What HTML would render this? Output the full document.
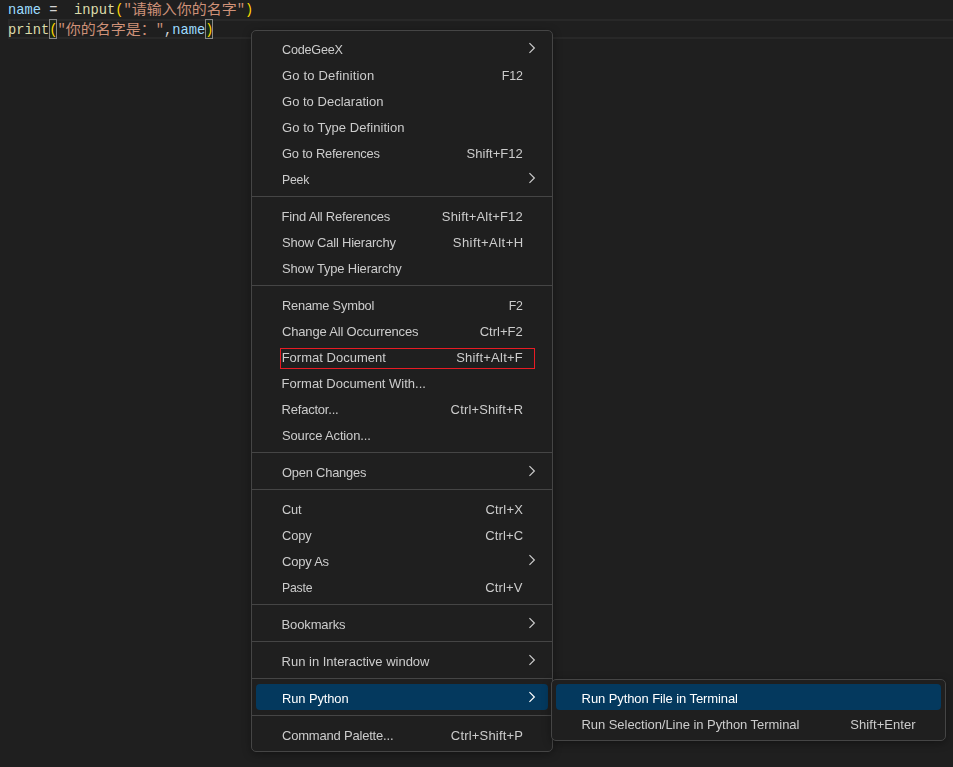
<!DOCTYPE html>
<html lang="en"><head><meta charset="utf-8"><title>Editor context menu</title>
<style>
html,body{margin:0;padding:0;}
body{width:953px;height:767px;background:#1f1f1f;overflow:hidden;position:relative;font-family:"Liberation Sans","Noto Sans CJK SC",sans-serif;}
.code{position:absolute;left:8px;height:20px;line-height:20px;white-space:pre;font-family:"Liberation Mono","Noto Sans CJK SC",monospace;font-size:13.75px;color:#d4d4d4;}
.code .cj{font-family:"Noto Sans CJK SC","Liberation Mono",monospace;font-size:15px;display:inline-block;line-height:20px;vertical-align:top;position:relative;top:-2px;transform:scaleY(0.93);transform-origin:50% 20%}
.l1{top:1px;}
.l2{top:21px;}
.hl{position:absolute;left:8px;top:19px;width:1000px;height:20px;box-sizing:border-box;border:2px solid #282828;}
.bm{position:absolute;top:19px;width:8px;height:20px;box-sizing:border-box;border:1px solid #888;background:rgba(0,100,0,0.1);}
.v{color:#9cdcfe} .f{color:#dcdcaa} .b{color:#ffd700} .s{color:#ce9178}
.menu{will-change:transform;position:absolute;box-sizing:border-box;background:#1f1f1f;border:1px solid #454545;border-radius:5px;padding:4px 0;box-shadow:0 2px 8px rgba(0,0,0,0.36);font-size:13px;color:#cccccc;}
#m1{left:251px;top:30px;width:302px;height:722px;}
#m2{left:551px;top:679px;width:395px;height:62px;}
.item{position:relative;height:26px;line-height:26px;margin:0 4px;border-radius:4px;white-space:nowrap;}
.item.sel{background:#04395e;color:#fff;}
.lbl{position:absolute;left:26px;top:2px;transform-origin:0 50%;}
.kb{position:absolute;right:26px;top:2px;transform-origin:100% 50%;}
.chev{position:absolute;right:12px;top:7px;}
.sep{height:1px;background:#454545;margin:5px 0;}
.red{position:absolute;left:280px;top:348px;width:255px;height:21px;box-sizing:border-box;border:1px solid #e81c24;}
</style></head><body>
<div class="hl"></div>
<div class="bm" style="left:49px"></div>
<div class="bm" style="left:205px"></div>
<div class="code l1"><span class="v">name</span> =  <span class="f">input</span><span class="b">(</span><span class="s">"<span class="cj">请输入你的名字</span>"</span><span class="b">)</span></div>
<div class="code l2"><span class="f">print</span><span class="b">(</span><span class="s">"<span class="cj">你的名字是：</span>"</span>,<span class="v">name</span><span class="b">)</span></div>
<div class="menu" id="m1">
<div class="item"><span class="lbl" style="letter-spacing:-0.22px;transform:scaleX(0.9712);left:26.13px">CodeGeeX</span><svg class="chev" width="8" height="12" viewBox="0 0 8 12"><path d="M1.45 1.15 L6.35 6 L1.45 10.85" fill="none" stroke="currentColor" stroke-width="1.2" stroke-linejoin="miter"/></svg></div>
<div class="item"><span class="lbl" style="letter-spacing:0.17px;left:26.03px">Go to Definition</span><span class="kb" style="letter-spacing:-0.22px;transform:scaleX(0.9618);right:25.28px">F12</span></div>
<div class="item"><span class="lbl" style="letter-spacing:0.01px;transform:scaleX(1.0006);left:26.08px">Go to Declaration</span></div>
<div class="item"><span class="lbl" style="letter-spacing:0.07px;left:26.03px">Go to Type Definition</span></div>
<div class="item"><span class="lbl" style="letter-spacing:-0.22px;transform:scaleX(0.9943);left:26.08px">Go to References</span><span class="kb" style="letter-spacing:0.03px;right:25.22px">Shift+F12</span></div>
<div class="item"><span class="lbl" style="letter-spacing:-0.22px;transform:scaleX(0.9445);left:25.80px">Peek</span><svg class="chev" width="8" height="12" viewBox="0 0 8 12"><path d="M1.45 1.15 L6.35 6 L1.45 10.85" fill="none" stroke="currentColor" stroke-width="1.2" stroke-linejoin="miter"/></svg></div>
<div class="sep"></div>
<div class="item"><span class="lbl" style="letter-spacing:-0.22px;left:25.60px">Find All References</span><span class="kb" style="letter-spacing:0.18px;right:25.08px">Shift+Alt+F12</span></div>
<div class="item"><span class="lbl" style="letter-spacing:-0.20px;transform:scaleX(0.9976);left:25.95px">Show Call Hierarchy</span><span class="kb" style="letter-spacing:0.44px;transform:scaleX(1.0035);right:24.17px">Shift+Alt+H</span></div>
<div class="item"><span class="lbl" style="letter-spacing:-0.17px;transform:scaleX(0.9961);left:25.95px">Show Type Hierarchy</span></div>
<div class="sep"></div>
<div class="item"><span class="lbl" style="letter-spacing:-0.22px;transform:scaleX(0.9883);left:25.80px">Rename Symbol</span><span class="kb" style="letter-spacing:-0.22px;transform:scaleX(0.9516);right:25.61px">F2</span></div>
<div class="item"><span class="lbl" style="letter-spacing:-0.19px;transform:scaleX(1.0019);left:26.10px">Change All Occurrences</span><span class="kb" style="letter-spacing:0.02px;right:25.24px">Ctrl+F2</span></div>
<div class="item"><span class="lbl" style="letter-spacing:0.01px;left:25.68px">Format Document</span><span class="kb" style="letter-spacing:0.24px;transform:scaleX(0.9977);right:25.23px">Shift+Alt+F</span></div>
<div class="item"><span class="lbl" style="letter-spacing:-0.01px;left:25.60px">Format Document With...</span></div>
<div class="item"><span class="lbl" style="letter-spacing:-0.22px;left:25.60px">Refactor...</span><span class="kb" style="letter-spacing:0.20px;transform:scaleX(0.9915);right:24.74px">Ctrl+Shift+R</span></div>
<div class="item"><span class="lbl" style="letter-spacing:-0.12px;transform:scaleX(0.9951);left:25.95px">Source Action...</span></div>
<div class="sep"></div>
<div class="item"><span class="lbl" style="letter-spacing:-0.22px;transform:scaleX(0.9928);left:26.18px">Open Changes</span><svg class="chev" width="8" height="12" viewBox="0 0 8 12"><path d="M1.45 1.15 L6.35 6 L1.45 10.85" fill="none" stroke="currentColor" stroke-width="1.2" stroke-linejoin="miter"/></svg></div>
<div class="sep"></div>
<div class="item"><span class="lbl" style="letter-spacing:-0.22px;transform:scaleX(0.9850);left:26.16px">Cut</span><span class="kb" style="letter-spacing:0.16px;right:25.03px">Ctrl+X</span></div>
<div class="item"><span class="lbl" style="letter-spacing:-0.14px;transform:scaleX(0.9881);left:26.13px">Copy</span><span class="kb" style="letter-spacing:0.10px;right:24.86px">Ctrl+C</span></div>
<div class="item"><span class="lbl" style="letter-spacing:-0.22px;left:26.03px">Copy As</span><svg class="chev" width="8" height="12" viewBox="0 0 8 12"><path d="M1.45 1.15 L6.35 6 L1.45 10.85" fill="none" stroke="currentColor" stroke-width="1.2" stroke-linejoin="miter"/></svg></div>
<div class="item"><span class="lbl" style="letter-spacing:-0.22px;transform:scaleX(0.9420);left:25.80px">Paste</span><span class="kb" style="letter-spacing:0.11px;right:25.55px">Ctrl+V</span></div>
<div class="sep"></div>
<div class="item"><span class="lbl" style="letter-spacing:-0.14px;left:25.60px">Bookmarks</span><svg class="chev" width="8" height="12" viewBox="0 0 8 12"><path d="M1.45 1.15 L6.35 6 L1.45 10.85" fill="none" stroke="currentColor" stroke-width="1.2" stroke-linejoin="miter"/></svg></div>
<div class="sep"></div>
<div class="item"><span class="lbl" style="letter-spacing:-0.01px;left:25.60px">Run in Interactive window</span><svg class="chev" width="8" height="12" viewBox="0 0 8 12"><path d="M1.45 1.15 L6.35 6 L1.45 10.85" fill="none" stroke="currentColor" stroke-width="1.2" stroke-linejoin="miter"/></svg></div>
<div class="sep"></div>
<div class="item sel"><span class="lbl" style="letter-spacing:-0.10px;transform:scaleX(0.9934);left:26.04px">Run Python</span><svg class="chev" width="8" height="12" viewBox="0 0 8 12"><path d="M1.45 1.15 L6.35 6 L1.45 10.85" fill="none" stroke="currentColor" stroke-width="1.2" stroke-linejoin="miter"/></svg></div>
<div class="sep"></div>
<div class="item"><span class="lbl" style="letter-spacing:-0.20px;left:26.03px">Command Palette...</span><span class="kb" style="letter-spacing:0.19px;right:24.82px">Ctrl+Shift+P</span></div>
</div>
<div class="menu" id="m2">
<div class="item sel"><span class="lbl" style="letter-spacing:-0.09px;left:25.60px">Run Python File in Terminal</span></div>
<div class="item"><span class="lbl" style="letter-spacing:-0.04px;left:25.44px">Run Selection/Line in Python Terminal</span><span class="kb" style="letter-spacing:0.06px;right:25.34px">Shift+Enter</span></div>
</div>
<div class="red"></div>
</body></html>
